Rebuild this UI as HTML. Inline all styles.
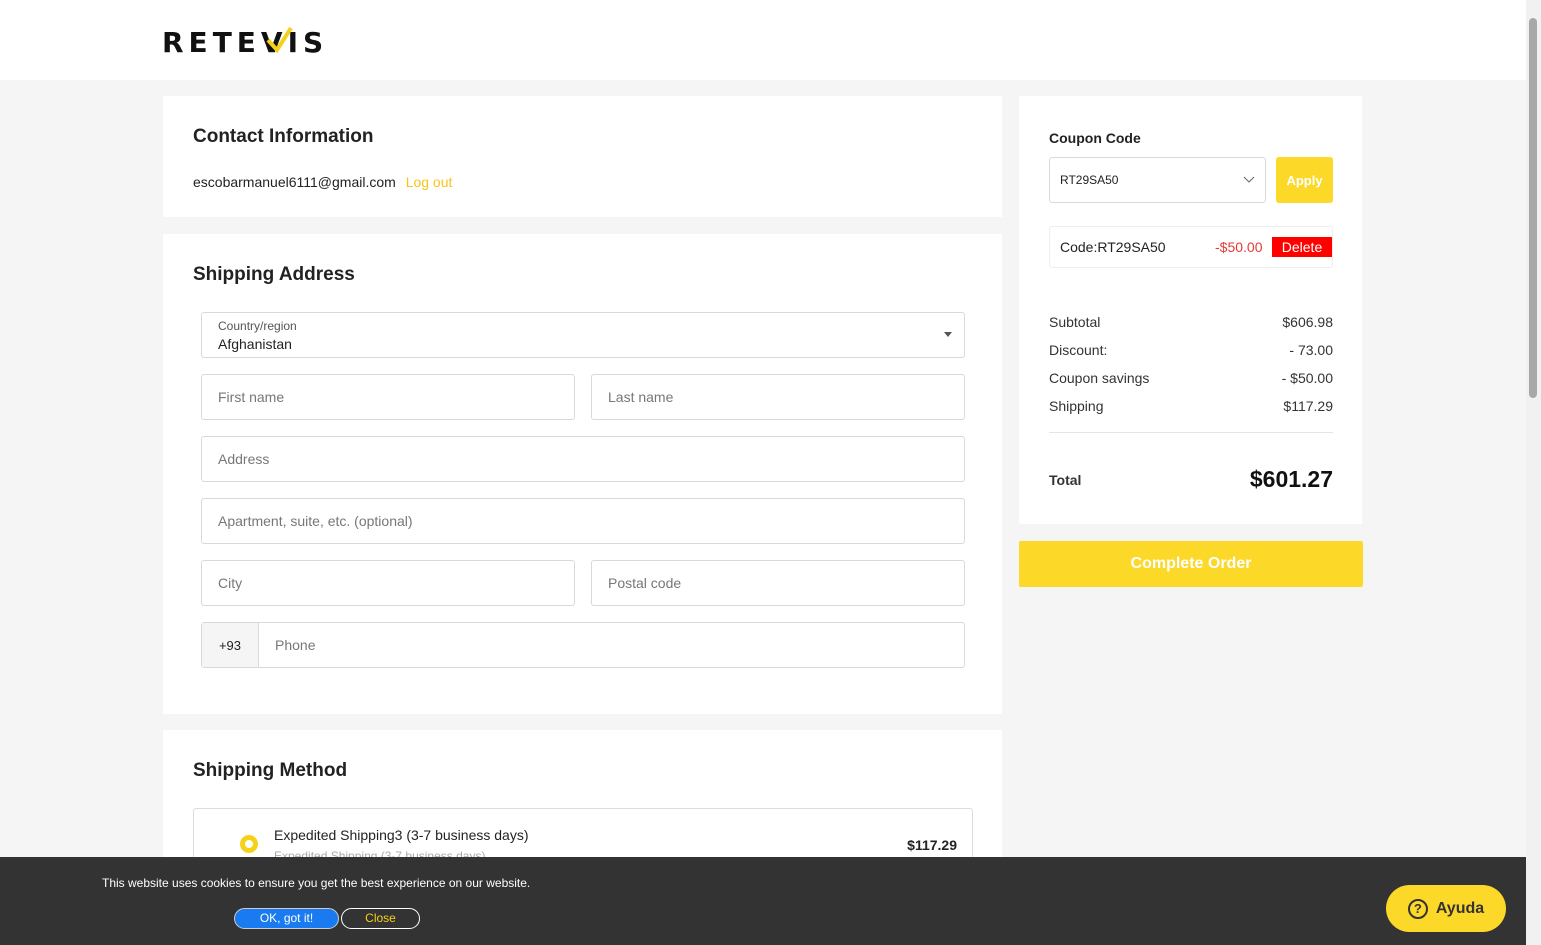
<!DOCTYPE html>
<html><head><meta charset="utf-8"><style>
*{box-sizing:border-box;margin:0;padding:0}
body{width:1541px;height:945px;overflow:hidden;background:#f5f5f5;font-family:"Liberation Sans",sans-serif;color:#222;position:relative}
.hdr{position:absolute;left:0;top:0;width:1526px;height:80px;background:#fff}
.logo{position:absolute;left:162px;top:26px;font-weight:900;font-size:28px;letter-spacing:5px;color:#111;font-family:"DejaVu Sans",sans-serif}
.card{position:absolute;background:#fff}
h2{font-size:19px;font-weight:bold;color:#222;position:absolute}
.inp{position:absolute;border:1px solid #d9d9d9;border-radius:3px;background:#fff;font-size:14px;color:#777;padding-left:16px;display:flex;align-items:center}
.row{position:absolute;left:1049px;width:284px;display:flex;justify-content:space-between;font-size:14px;color:#333}
.sb{position:absolute;right:0;top:0;width:15px;height:945px;background:#f1f1f1}
</style></head><body>
<div class="hdr"><div class="logo">RETEVIS</div></div>
<svg style="position:absolute;left:264px;top:24px" width="30" height="30"><path d="M4 16 L13 26 L27 4" stroke="#f5d21a" stroke-width="4" fill="none"/></svg>

<div class="card" style="left:163px;top:96px;width:839px;height:121px">
<h2 style="left:30px;top:30px">Contact Information</h2>
<div style="position:absolute;left:30px;top:78px;font-size:14px">escobarmanuel6111@gmail.com <span style="color:#f5c518;margin-left:6px">Log out</span></div>
</div>

<div class="card" style="left:163px;top:234px;width:839px;height:480px">
<h2 style="left:30px;top:30px">Shipping Address</h2>
</div>
<div class="inp" style="left:201px;top:312px;width:764px;height:46px;display:block;padding-top:6px;color:#555">
<div style="font-size:12px">Country/region</div><div style="font-size:14px;color:#222;margin-top:3px">Afghanistan</div>
<div style="position:absolute;right:12px;top:19px;border:4px solid transparent;border-top:5px solid #555"></div></div>
<div class="inp" style="left:201px;top:374px;width:374px;height:46px">First name</div>
<div class="inp" style="left:591px;top:374px;width:374px;height:46px">Last name</div>
<div class="inp" style="left:201px;top:436px;width:764px;height:46px">Address</div>
<div class="inp" style="left:201px;top:498px;width:764px;height:46px">Apartment, suite, etc. (optional)</div>
<div class="inp" style="left:201px;top:560px;width:374px;height:46px">City</div>
<div class="inp" style="left:591px;top:560px;width:374px;height:46px">Postal code</div>
<div class="inp" style="left:201px;top:622px;width:764px;height:46px;padding-left:0">
<div style="width:57px;height:44px;background:#f5f5f5;border-right:1px solid #d9d9d9;display:flex;align-items:center;justify-content:center;color:#222;font-size:13px">+93</div>
<span style="margin-left:16px">Phone</span></div>

<div class="card" style="left:163px;top:730px;width:839px;height:215px">
<h2 style="left:30px;top:30px">Shipping Method</h2>
<div style="position:absolute;left:30px;top:78px;width:780px;height:70px;border:1px solid #ddd;border-radius:3px">
<div style="position:absolute;left:46px;top:26px;width:18px;height:18px;border-radius:50%;border:5px solid #f5d21a"></div>
<div style="position:absolute;left:80px;top:18px;font-size:14px">Expedited Shipping3 (3-7 business days)</div>
<div style="position:absolute;left:80px;top:40px;font-size:12px;color:#aaa">Expedited Shipping (3-7 business days)</div>
<div style="position:absolute;right:15px;top:28px;font-size:14px;font-weight:bold">$117.29</div>
</div></div>

<div class="card" style="left:1019px;top:96px;width:343px;height:428px"></div>
<div style="position:absolute;left:1049px;top:130px;font-size:14px;font-weight:bold">Coupon Code</div>
<div class="inp" style="left:1049px;top:157px;width:217px;height:46px;padding-left:10px;color:#222;font-size:12px">RT29SA50
<svg style="position:absolute;right:10px;top:18px" width="12" height="8"><path d="M1 1 L6 6 L11 1" stroke="#666" fill="none"/></svg></div>
<div style="position:absolute;left:1276px;top:157px;width:57px;height:46px;background:#fcd829;border-radius:3px;color:#fff;font-size:13px;font-weight:bold;display:flex;align-items:center;justify-content:center">Apply</div>
<div style="position:absolute;left:1049px;top:226px;width:284px;height:42px;border:1px solid #eee;border-radius:3px;font-size:14px">
<span style="position:absolute;left:10px;top:12px">Code:RT29SA50</span>
<span style="position:absolute;left:165px;top:12px;color:#e53935">-$50.00</span>
<span style="position:absolute;left:222px;top:10px;width:60px;height:20px;background:#f00;color:#fff;text-align:center;line-height:20px">Delete</span></div>
<div class="row" style="top:314px"><span>Subtotal</span><span>$606.98</span></div>
<div class="row" style="top:342px"><span>Discount:</span><span>- 73.00</span></div>
<div class="row" style="top:370px"><span>Coupon savings</span><span>- $50.00</span></div>
<div class="row" style="top:398px"><span>Shipping</span><span>$117.29</span></div>
<div style="position:absolute;left:1049px;top:432px;width:284px;height:1px;background:#e5e5e5"></div>
<div class="row" style="top:466px;align-items:center"><span style="font-weight:bold;font-size:14px">Total</span><span style="font-weight:bold;font-size:23px;color:#111">$601.27</span></div>
<div style="position:absolute;left:1019px;top:541px;width:344px;height:46px;background:#fcd829;border-radius:2px;color:#fff;font-size:16px;font-weight:bold;display:flex;align-items:center;justify-content:center">Complete Order</div>

<div style="position:absolute;left:0;top:857px;width:1526px;height:88px;background:#333"></div>
<div style="position:absolute;left:102px;top:876px;font-size:12px;color:#fff">This website uses cookies to ensure you get the best experience on our website.</div>
<div style="position:absolute;left:234px;top:908px;width:105px;height:21px;border-radius:11px;background:#1a7bf0;border:1px solid #ccc;color:#fff;font-size:12px;text-align:center;line-height:19px">OK, got it!</div>
<div style="position:absolute;left:341px;top:908px;width:79px;height:21px;border-radius:11px;border:1px solid #fff;color:#f5d21a;font-size:12px;text-align:center;line-height:19px">Close</div>
<div style="position:absolute;left:1386px;top:885px;width:120px;height:47px;border-radius:24px;background:#fcd829;color:#333;font-weight:bold;font-size:16px;display:flex;align-items:center;justify-content:center;gap:8px">
<span style="width:20px;height:20px;border:2px solid #333;border-radius:50%;font-size:13px;display:flex;align-items:center;justify-content:center">?</span>Ayuda</div>
<div class="sb"><div style="position:absolute;left:3px;top:18px;width:8px;height:380px;background:#a8a8a8;border-radius:4px"></div></div>
</body></html>
